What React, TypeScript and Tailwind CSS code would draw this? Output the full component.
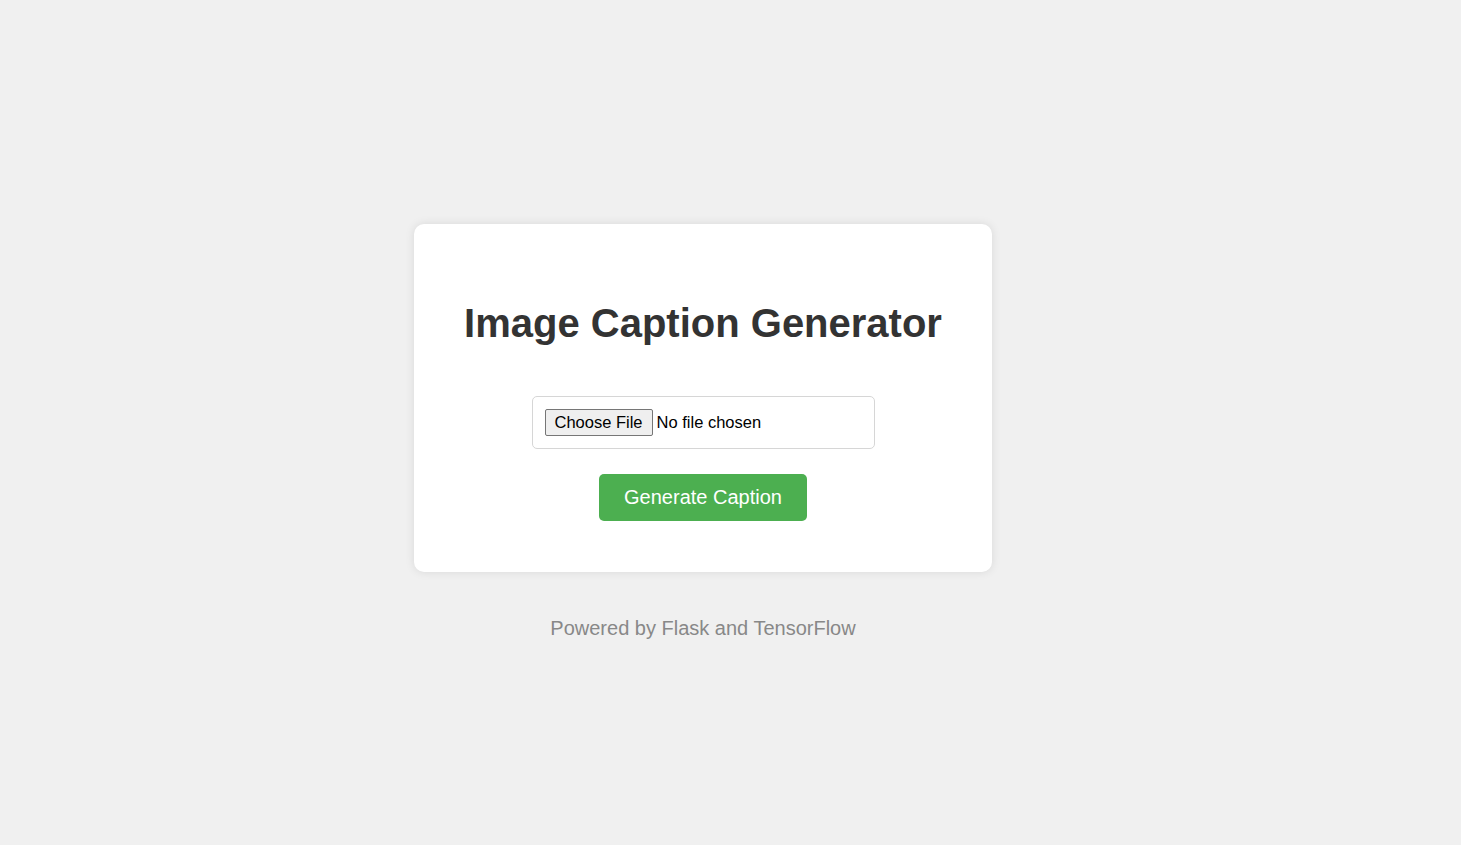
function App() {
  return (
    <div
      className="min-h-screen w-full bg-[#f0f0f0] flex flex-col items-center pt-[224px] pr-[55px]"
      style={{ fontFamily: '"Liberation Sans", Arial, sans-serif' }}
    >
      <div className="w-[578px] bg-white rounded-[10px] shadow-[0_0_10px_rgba(0,0,0,0.1)] flex flex-col items-center pt-[76px] pb-[51px]">
        <h1 className="text-[40px] leading-[46px] font-bold text-[#333]">Image Caption Generator</h1>

        <form className="flex flex-col items-center mt-[50px]" onSubmit={(e) => e.preventDefault()}>
          <input
            type="file"
            accept="image/*"
            className="w-[343px] h-[53px] p-[12px] border border-[#d6d6d6] rounded-[5px] text-[16.5px] leading-[23px] text-black file:h-[27px] file:px-[9px] file:mr-[4px] file:border file:border-[#767676] file:bg-[#efefef] file:rounded-[2px] file:text-black"
          />
          <button
            type="submit"
            className="mt-[25px] h-[47px] px-[25px] bg-[#4caf50] text-white text-[20px] leading-[23px] rounded-[5px]"
          >
            Generate Caption
          </button>
        </form>
      </div>

      <p className="mt-[45px] text-[20px] leading-[23px] text-[#888]">Powered by Flask and TensorFlow</p>
    </div>
  );
}

export default App;
